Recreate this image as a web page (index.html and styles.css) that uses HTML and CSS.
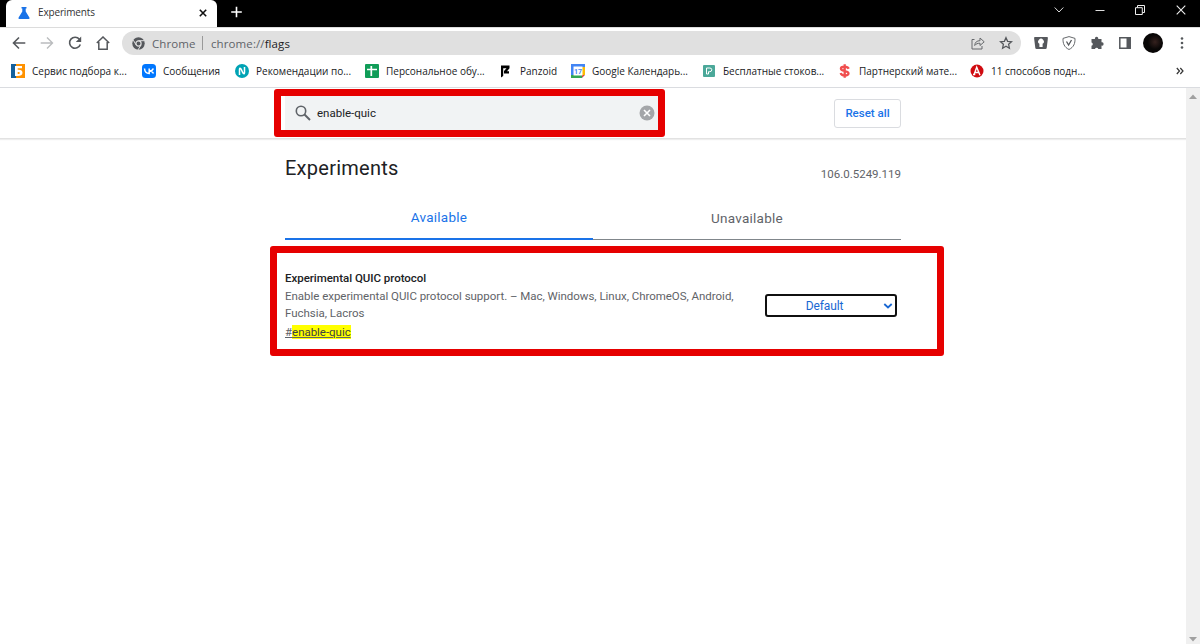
FILE: index.html
```
<!DOCTYPE html>
<html lang="en">
<head>
    <meta charset="UTF-8">
    <meta name="viewport" content="width=device-width, initial-scale=1.0">
    <title>Experiments</title>
    <link rel="stylesheet" href="styles.css">
</head>
<body>
    <div class="tab-strip">
        <div class="tab">
            <svg class="tab-icon" width="12" height="12" viewBox="0 0 12 12"><path d="M3.5 0h5v1.4h-.8v3L11.4 10.5Q12 12 10.6 12H1.4Q0 12 .6 10.5L4.3 4.4v-3h-.8z" fill="#1a73e8"/></svg>
            <span class="tab-title">Experiments</span>
            <svg class="tab-close" width="8" height="8" viewBox="0 0 8 8"><path d="M.8.8l6.4 6.4M7.2.8L.8 7.2" stroke="#111" stroke-width="1.6"/></svg>
        </div>
        <svg class="new-tab" width="12" height="12" viewBox="0 0 12 12"><path d="M5.5.7v10.6M.2 6h10.6" stroke="#fff" stroke-width="1.6"/></svg>
        <div class="window-buttons">
            <svg width="12" height="12" viewBox="0 0 12 12"><path d="M1.7 3.5L6 8l4.3-4.5" fill="none" stroke="#ddd"/></svg>
            <svg width="12" height="12" viewBox="0 0 12 12"><path d="M1.5 6.5h9" stroke="#ddd"/></svg>
            <svg width="12" height="12" viewBox="0 0 12 12"><path d="M1.5 3.7h6.8v6.8H1.5zM3.5 3.5v-2h7v7h-2" fill="none" stroke="#eee"/></svg>
            <svg width="12" height="12" viewBox="0 0 12 12"><path d="M1.7 1.7l8.6 8.6M10.3 1.7l-8.6 8.6" stroke="#eee" stroke-width="1.1"/></svg>
        </div>
    </div>

    <div class="toolbar">
        <div class="nav-buttons">
            <svg width="14" height="14" viewBox="0 0 14 14"><path d="M13.3 7H1.8M7 1.5L1.5 7 7 12.5" fill="none" stroke="#55585c" stroke-width="1.6"/></svg>
            <svg width="14" height="14" viewBox="0 0 14 14"><path d="M.7 7h11.5M7 1.5L12.5 7 7 12.5" fill="none" stroke="#babcbe" stroke-width="1.4"/></svg>
            <svg width="14" height="14" viewBox="0 0 14 14"><path d="M11.4 3.3A5.5 5.5 0 1 0 12.3 8.5" fill="none" stroke="#55585c" stroke-width="1.6"/><path d="M13.2.5v5.4H7.8z" fill="#55585c"/></svg>
            <svg width="14" height="14" viewBox="0 0 14 14"><path d="M.8 7L7 1l6.2 6M2.8 6v7.2h8.4V6" fill="none" stroke="#55585c" stroke-width="1.5"/></svg>
        </div>
        <div class="address-bar">
            <svg width="13" height="13" viewBox="0 0 13 13"><circle cx="6.5" cy="6.5" r="6.2" fill="#55585c"/><circle cx="6.5" cy="6.5" r="2.6" fill="#55585c" stroke="#e0e0e0" stroke-width="1.2"/><path d="M6.5 3.7h5.7M4.2 8L1.3 3.2M8.9 8l-2.9 5" stroke="#e0e0e0"/></svg>
            <span class="site-name">Chrome</span>
            <span class="divider"></span>
            <span class="url">chrome://<b>flags</b></span>
            <div class="address-icons">
                <svg width="14" height="14" viewBox="0 0 14 14"><path d="M3.5 3.5H1v9.5h10V10M3.7 9.5C4 6 6 4.7 9 4.7V2l4.2 3.8L9 9.5V7.2c-2.5 0-4 .7-5.3 2.3z" fill="none" stroke="#66696c"/></svg>
                <svg width="14" height="14" viewBox="0 0 14 14"><path d="M7 1.7l1.6 3.6 3.9.4-2.9 2.6.8 3.9L7 10.2l-3.4 2 .8-3.9-2.9-2.6 3.9-.4z" fill="none" stroke="#55585c" stroke-width="1.3"/></svg>
            </div>
        </div>
        <div class="extensions">
            <svg width="14" height="14" viewBox="0 0 14 14"><path d="M1 1h12q1 0 .9 1l-1.2 10q-.2 1-1.2 1H2.5q-1 0-1.2-1L.1 2Q0 1 1 1z" fill="#55585c"/><path d="M5.4 7.8a2.8 2.8 0 1 1 3.2 0V11H5.4z" fill="#fff"/></svg>
            <svg width="14" height="14" viewBox="0 0 14 14"><path d="M7 .6l6 1.8c.2 5-1.2 8.8-6 11.1C2.2 11.2.8 7.4 1 2.4z" fill="#fff" stroke="#66696c"/><path d="M4.5 5.5L6.6 9l2.9-5" fill="none" stroke="#55585c" stroke-width="1.3"/></svg>
            <svg width="14" height="14" viewBox="0 0 14 14"><path d="M1.5 3H5a1.7 1.7 0 1 1 3.2 0h3.3v3.3a1.7 1.7 0 1 1 0 3.3V13H8.3a1.7 1.7 0 0 0-3.3 0H1.5V9.8a1.7 1.7 0 0 0 0-3.3z" fill="#55585c"/></svg>
            <svg width="14" height="14" viewBox="0 0 14 14"><path d="M1.8 1.8h10.4v10.4H1.8z" fill="#fff" stroke="#55585c" stroke-width="1.5"/><path d="M8.5 1.5h4v11h-4z" fill="#55585c"/></svg>
            <span class="avatar"></span>
            <svg width="14" height="14" viewBox="0 0 14 14"><circle cx="7" cy="2.5" r="1.3" fill="#55585c"/><circle cx="7" cy="7" r="1.3" fill="#55585c"/><circle cx="7" cy="11.5" r="1.3" fill="#55585c"/></svg>
        </div>
    </div>

    <div class="bookmarks">
        <div class="bookmark"><svg width="14" height="14" viewBox="0 0 14 14"><path d="M0 0h14v14H0z" fill="#ff9200"/><path d="M0 0h5v14H0z" fill="#15609b"/><path d="M4 2h7v2.2H6.7v1.6c3-.3 4.8.6 4.8 3 0 2.7-2.5 3.6-7.5 3.2zM6.7 7.9v2.2c1.5 0 2.2-.3 2.2-1.1s-.7-1.2-2.2-1.1z" fill="#fff" fill-rule="evenodd"/></svg><span>Сервис подбора к...</span></div>
        <div class="bookmark"><svg width="14" height="14" viewBox="0 0 14 14"><rect width="14" height="14" rx="3.5" fill="#07f"/><path d="M2.5 4.5c.3 3.5 1.8 5 4.7 5v-5M11.3 4.5C10.8 6 9.5 7 7.5 7c2 0 3.3 1 4 2.5" fill="none" stroke="#fff" stroke-width="1.5"/></svg><span>Сообщения</span></div>
        <div class="bookmark"><svg width="14" height="14" viewBox="0 0 14 14"><circle cx="7" cy="7" r="7" fill="#00a3b4"/><path d="M4.5 11V5.5Q4.5 3.2 6 5l2 4q1.5 1.8 1.5-.5V3" fill="none" stroke="#fff" stroke-width="1.5"/></svg><span>Рекомендации по...</span></div>
        <div class="bookmark"><svg width="14" height="14" viewBox="0 0 14 14"><rect width="14" height="14" rx="1" fill="#109d58"/><path d="M2 5.5h10M6.3 2v10" stroke="#fff" stroke-width="1.7"/></svg><span>Персональное обу...</span></div>
        <div class="bookmark"><svg width="14" height="14" viewBox="0 0 14 14"><path d="M2 1.5h8.5v2.8L8 7.2h2v2.3H5V7l2.5-2.7H4.2V12L2 13.5z" fill="#000"/></svg><span>Panzoid</span></div>
        <div class="bookmark"><svg width="14" height="14" viewBox="0 0 14 14"><path d="M0 0h14v14H0z" fill="#4285f4"/><path d="M11 3h3v8h-3z" fill="#fbbc04"/><path d="M0 11h11v3H0z" fill="#34a853"/><path d="M11 11h3l-3 3z" fill="#ea4335"/><path d="M14 11v3h-3z" fill="#fff"/><path d="M2.5 2.5h9v9h-9z" fill="#fff"/><text class="day" x="3" y="9.8">17</text></svg><span>Google Календарь...</span></div>
        <div class="bookmark"><svg width="14" height="14" viewBox="0 0 14 14"><rect x="1" y="1" width="12" height="12" rx="1" fill="#4ba899"/><path d="M4.5 4h3.3q2 0 2 1.8t-2 1.9H6.5V10h-2z" fill="none" stroke="#fff"/></svg><span>Бесплатные стоков...</span></div>
        <div class="bookmark"><svg width="14" height="14" viewBox="0 0 14 14"><path d="M10.7 4.8C9.5 2 2.9 2.2 2.9 4.7 2.9 7.5 10.5 6.3 10.5 9.5c0 2.8-7 2.8-7.8-.5M6.7.3v13.4" fill="none" stroke="#f04e4e" stroke-width="2.3"/></svg><span>Партнерский мате...</span></div>
        <div class="bookmark"><svg width="14" height="14" viewBox="0 0 14 14"><circle cx="7" cy="7" r="6.5" fill="#d00b10"/><path d="M3 10.5h2.3M4.2 10.3L6.7 3.3l3.3 8M5 8.5h4.5" fill="none" stroke="#fff" stroke-width="1.4"/></svg><span>11 способов подн...</span></div>
        <svg class="more" width="8" height="8" viewBox="0 0 8 8"><path d="M.8 1l2.7 3L.8 7M4.3 1L7 4 4.3 7" fill="none" stroke="#333" stroke-width="1.2"/></svg>
    </div>

    <div class="viewport">
        <main class="page">
            <header class="page-header">
                <div class="header-content">
                    <div class="search">
                        <svg width="16" height="16" viewBox="0 0 16 16"><circle cx="6" cy="6" r="4.7" fill="none" stroke="#5f6368" stroke-width="1.6"/><path d="M9.5 9.5l5.5 5.5" stroke="#5f6368" stroke-width="2"/></svg>
                        <span class="search-text">enable-quic</span>
                        <svg class="clear" width="16" height="16" viewBox="0 0 16 16"><circle cx="8" cy="8" r="7.5" fill="#a4a6a9"/><path d="M5 5l6 6M11 5l-6 6" stroke="#fff" stroke-width="1.6"/></svg>
                        <div class="highlight search-highlight"></div>
                    </div>
                    <button class="reset">Reset all</button>
                </div>
            </header>

            <div class="content">
                <div class="title-row">
                    <h1>Experiments</h1>
                    <span class="version">106.0.5249.119</span>
                </div>
                <div class="tabs">
                    <div class="tabs-item selected">Available</div>
                    <div class="tabs-item">Unavailable</div>
                </div>
                <div class="experiment">
                    <div class="experiment-text">
                        <h2>Experimental QUIC protocol</h2>
                        <p>Enable experimental QUIC protocol support. – Mac, Windows, Linux, ChromeOS, Android, Fuchsia, Lacros</p>
                        <a class="permalink">#<mark>enable-quic</mark></a>
                    </div>
                    <div class="select">
                        <span>Default</span>
                        <svg width="10" height="8" viewBox="0 0 10 8"><path d="M1.3 2L5 5.5 8.7 2" fill="none" stroke="#1967d2" stroke-width="1.8"/></svg>
                    </div>
                    <div class="highlight experiment-highlight"></div>
                </div>
            </div>
        </main>
        <div class="scrollbar">
            <svg width="8" height="5" viewBox="0 0 8 5"><path d="M0 5l4-4.5L8 5z" fill="#a0a0a0"/></svg>
            <svg width="8" height="5" viewBox="0 0 8 5"><path d="M0 0h8L4 4.5z" fill="#a0a0a0"/></svg>
        </div>
    </div>
</body>
</html>
```

FILE: styles.css
```
/* Reset and Base Styles */
* {
    margin: 0;
    padding: 0;
    box-sizing: border-box;
}

body {
    width: 1200px;
    height: 644px;
    display: flex;
    flex-direction: column;
    overflow: hidden;
    background: #fff;
    font-family: Roboto, sans-serif;
    color: #202124;
}

svg {
    display: block;
    flex-shrink: 0;
}

/* Tab Strip */
.tab-strip {
    height: 27px;
    display: flex;
    background: #000;
    padding-left: 6px;
    font-family: "Open Sans", sans-serif;
}

.tab {
    width: 211px;
    display: flex;
    align-items: center;
    padding: 0 10px 2px 12px;
    background: #fff;
    border-radius: 6px 6px 0 0;
}

.tab-title {
    flex: 1;
    margin: -1px 0 0 8px;
    font-size: 10px;
    letter-spacing: -0.15px;
    color: #333;
}

.new-tab {
    margin: 6px 0 0 14px;
}

.window-buttons {
    margin-left: auto;
    display: flex;
    gap: 28.5px;
    padding: 4px 13.5px 0 0;
}

/* Toolbar */
.toolbar {
    height: 32px;
    display: flex;
    align-items: center;
    border-top: 1px solid #dcdcdc;
    padding: 0 0 1px 11.5px;
    font-family: "Open Sans", sans-serif;
}

.nav-buttons {
    display: flex;
    gap: 14px;
}

.address-bar {
    width: 899px;
    height: 24px;
    margin-left: 12.5px;
    display: flex;
    align-items: center;
    padding: 0 8px 0 10px;
    border-radius: 12px;
    background: #e0e0e0;
    color: #5f6368;
    font-size: 11.5px;
}

.site-name {
    margin-left: 7px;
    width: 43px;
    letter-spacing: 0.1px;
}

.divider {
    width: 1px;
    height: 14px;
    margin: 0 8px 0 7px;
    background: #999;
}

.url {
    letter-spacing: 0.1px;
}

.url b {
    font-weight: normal;
    color: #202124;
}

.address-icons {
    margin-left: auto;
    display: flex;
    gap: 14px;
}

.extensions {
    display: flex;
    align-items: center;
    gap: 14px;
    margin-left: 13px;
}

.avatar {
    width: 20px;
    height: 20px;
    border-radius: 50%;
    background: radial-gradient(circle at 60% 45%, #35211e, #080606 45%);
}

.extensions .avatar {
    margin: 0 -2px 0 -3px;
}

/* Bookmarks Bar */
.bookmarks {
    height: 29px;
    display: grid;
    grid-template-columns: 131px 93px 130px 134px 72px 131px 136px 132px 206px 8px;
    align-items: center;
    padding: 0 0 4px 11px;
    border-bottom: 1px solid #dadce0;
    font-family: "Open Sans", sans-serif;
    font-size: 10px;
}

.bookmark {
    display: flex;
    align-items: center;
    gap: 7px;
    white-space: nowrap;
}

.day {
    font: bold 7px Roboto, sans-serif;
    fill: #4285f4;
}

/* Page */
.viewport {
    flex: 1;
    display: flex;
}

.page {
    flex: 1;
}

.scrollbar {
    width: 14px;
    display: flex;
    flex-direction: column;
    justify-content: space-between;
    align-items: center;
    padding: 6px 0 2px;
    background: #f0f0f0;
}

.page-header {
    height: 51px;
    border-bottom: 1px solid #e2e2e2;
    box-shadow: 0 1px 1px #eee;
}

.header-content,
.content {
    width: 616px;
    margin: 0 auto;
}

.header-content {
    height: 50px;
    display: flex;
    align-items: center;
    justify-content: space-between;
}

.search {
    position: relative;
    width: 373px;
    height: 34px;
    display: flex;
    align-items: center;
    padding: 0 3px 0 10px;
    background: #f1f3f4;
    font-size: 11.5px;
}

.search-text {
    flex: 1;
    margin-left: 6px;
}

.reset {
    width: 67px;
    height: 29px;
    border: 1px solid #dadce0;
    border-radius: 3px;
    background: #fff;
    color: #1a73e8;
    font: 500 11.5px Roboto, sans-serif;
}

/* Red frames drawn over the page */
.highlight {
    position: absolute;
    border: 7px solid #e60000;
    border-radius: 3px;
}

.search-highlight {
    left: -11px;
    top: -7px;
    width: 391px;
    height: 48px;
}

.experiment-highlight {
    left: -15px;
    top: 6px;
    width: 674px;
    height: 110px;
}

/* Experiments */
.title-row {
    display: flex;
    justify-content: space-between;
    padding-top: 17px;
    height: 57px;
}

h1 {
    font-size: 20px;
    font-weight: 400;
    line-height: 24px;
    letter-spacing: 0.25px;
}

.version {
    margin-top: 11px;
    font-size: 11.5px;
    line-height: 14px;
    color: #5f6368;
}

.tabs {
    display: flex;
    height: 44px;
}

.tabs-item {
    flex: 1;
    padding-top: 13px;
    border-bottom: 1px solid #80868b;
    text-align: center;
    font-size: 13.5px;
    line-height: 18px;
    letter-spacing: 0.25px;
    color: #5f6368;
}

.tabs-item.selected {
    padding-top: 12px;
    border-bottom: 2px solid #1a73e8;
    color: #1a73e8;
}

.experiment {
    position: relative;
    display: flex;
    justify-content: space-between;
    padding: 30px 4.5px 0 0;
}

.experiment-text {
    width: 460px;
    font-size: 11.5px;
    line-height: 17px;
    letter-spacing: -0.03px;
    color: #5f6368;
}

h2 {
    font-size: 11.5px;
    font-weight: 500;
    line-height: 17px;
    margin-bottom: 1px;
    color: #202124;
}

.permalink {
    display: block;
    margin-top: 2px;
    text-decoration: underline;
}

mark {
    background: #ff0;
    color: #3c4043;
}

.select {
    width: 132px;
    height: 23px;
    margin-top: 24px;
    display: flex;
    align-items: center;
    padding: 0 2px 0 0;
    border: 2px solid #101010;
    border-radius: 3px;
    color: #1967d2;
    font-size: 12px;
    letter-spacing: -0.1px;
}

.select span {
    flex: 1;
    text-align: center;
}
```
